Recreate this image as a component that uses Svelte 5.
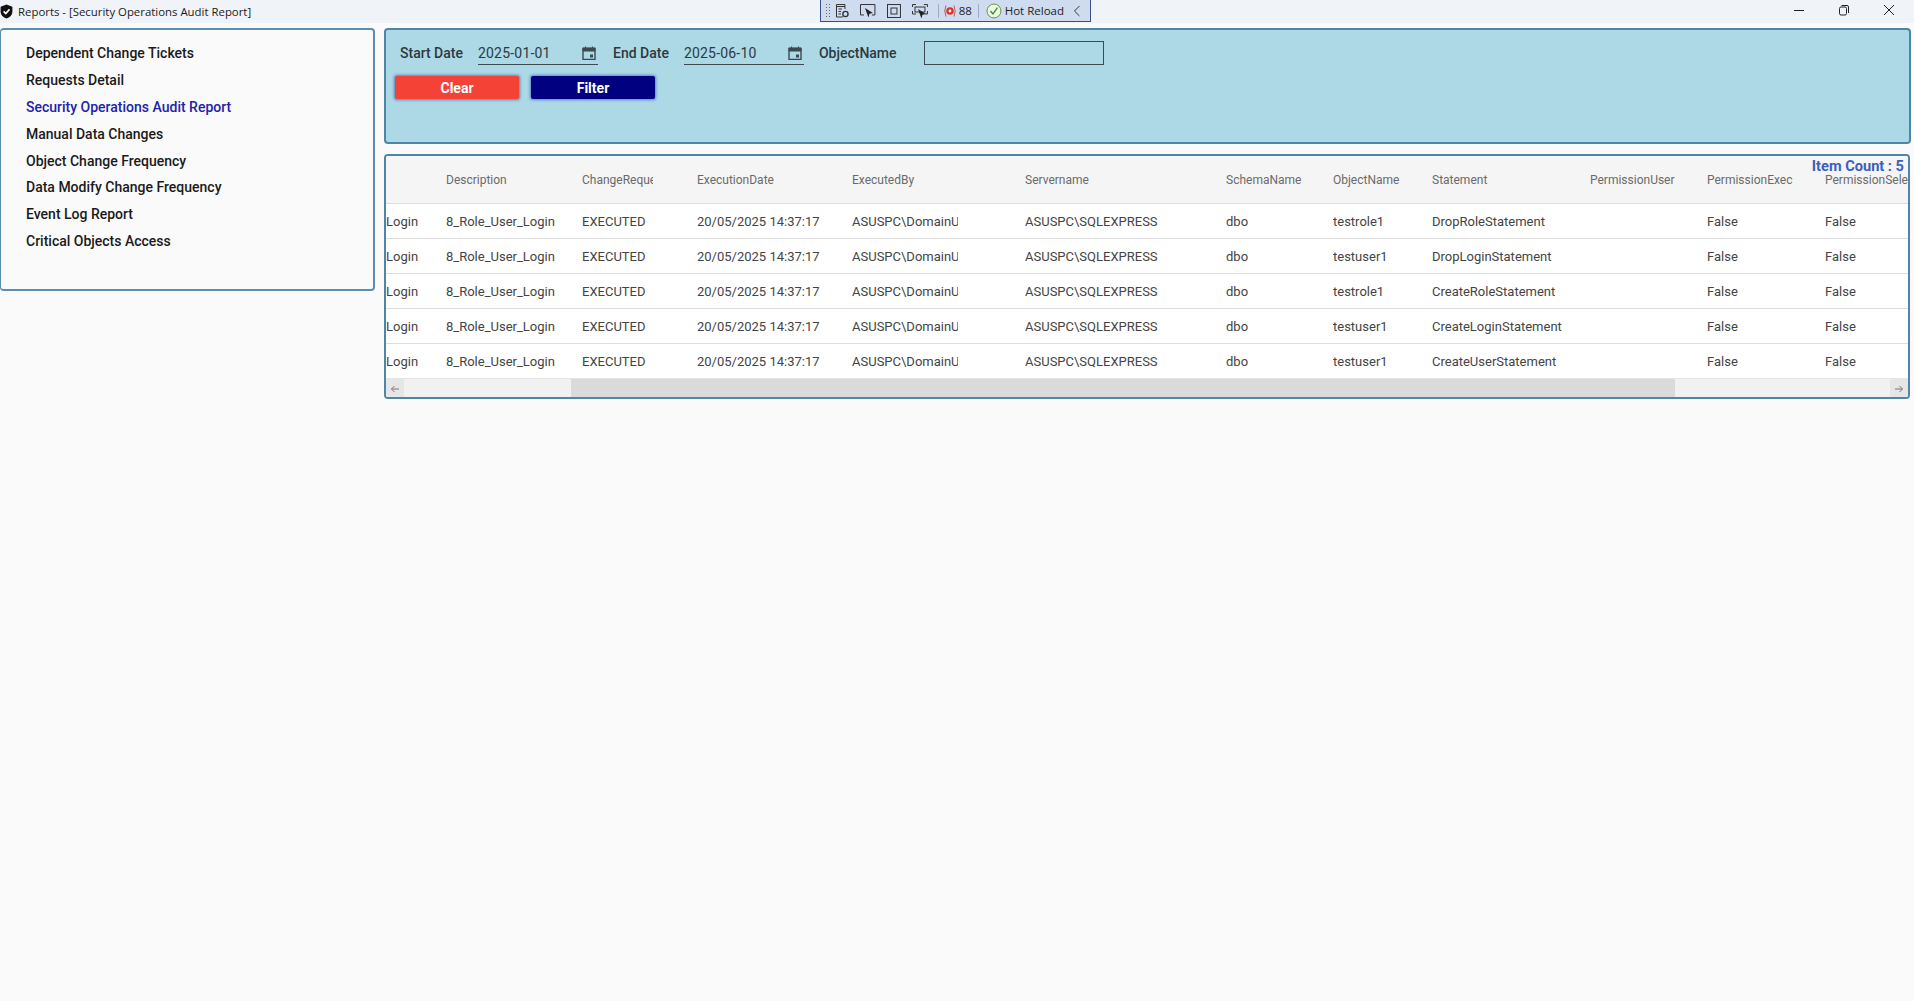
<script>
  const reports = [
    'Dependent Change Tickets',
    'Requests Detail',
    'Security Operations Audit Report',
    'Manual Data Changes',
    'Object Change Frequency',
    'Data Modify Change Frequency',
    'Event Log Report',
    'Critical Objects Access'
  ];
  const activeReport = 'Security Operations Audit Report';

  const columns = ['', 'Description', 'ChangeRequestStatus', 'ExecutionDate', 'ExecutedBy', 'Servername', 'SchemaName', 'ObjectName', 'Statement', 'PermissionUser', 'PermissionExec', 'PermissionSelect'];

  const rows = [
    ['testrole1', 'DropRoleStatement'],
    ['testuser1', 'DropLoginStatement'],
    ['testrole1', 'CreateRoleStatement'],
    ['testuser1', 'CreateLoginStatement'],
    ['testuser1', 'CreateUserStatement']
  ].map(([object, statement]) => [
    'Login', '8_Role_User_Login', 'EXECUTED', '20/05/2025 14:37:17', 'ASUSPC\\DomainUser',
    'ASUSPC\\SQLEXPRESS', 'dbo', object, statement, '', 'False', 'False'
  ]);
</script>

<div class="window">
  <header class="titlebar">
    <svg class="shield" viewBox="0 0 12 14" width="13" height="15">
      <path d="M6 0.5 L11.500 2.500 V7 C11.500 10.500 9 12.600 6 13.500 C3 12.600 0.500 10.500 0.500 7 V2.500 Z" fill="#111" />
      <path d="M3.300 6.900 L5.300 8.900 L8.800 5" fill="none" stroke="#fff" stroke-width="1.500" />
    </svg>
    <span class="title">Reports - [Security Operations Audit Report]</span>
    <div class="controls">
      <svg viewBox="0 0 12 12" width="12" height="12"><path d="M1 6.500 H11" stroke="#222" fill="none" /></svg>
      <svg viewBox="0 0 12 12" width="12" height="12">
        <rect x="1.500" y="3" width="7" height="8" rx="1.500" fill="none" stroke="#222" />
        <path d="M3.500 1.500 H9 Q10.500 1.500 10.500 3 V9" fill="none" stroke="#222" />
      </svg>
      <svg viewBox="0 0 12 12" width="12" height="12"><path d="M1 1 L11 11 M11 1 L1 11" stroke="#222" fill="none" /></svg>
    </div>
  </header>

  <div class="debugbar">
    <span class="grip"></span>
    <svg viewBox="0 0 16 16" width="16" height="16">
      <path d="M9 14 H2.500 V1.500 H11 V6" fill="none" stroke="#333" />
      <path d="M2.500 3.500 H11 M4.500 6 H8 M4.500 8.500 H7 M4.500 11 H7" stroke="#333" fill="none" />
      <circle cx="11.500" cy="11" r="2.600" fill="none" stroke="#333" stroke-width="1.400" />
    </svg>
    <svg viewBox="0 0 18 16" width="18" height="16">
      <path d="M5 12 H1.500 V1.500 H16 V12 H13" fill="none" stroke="#333" />
      <path d="M6 5 L14 10 L10.500 10.800 L9.500 14.500 Z" fill="#222" />
    </svg>
    <svg viewBox="0 0 16 16" width="16" height="16">
      <rect x="1.500" y="1.500" width="13" height="13" fill="none" stroke="#333" />
      <rect x="5" y="5" width="6" height="6" fill="none" stroke="#333" />
    </svg>
    <svg viewBox="0 0 18 16" width="18" height="16">
      <path d="M1.500 4 V1.500 H5 M13 1.500 H16.500 V4 M1.500 8 V11 H5 M16.500 8 V11 H14" fill="none" stroke="#333" />
      <rect x="4" y="4" width="10" height="5" fill="none" stroke="#333" />
      <path d="M7 6 L15 11 L11.500 11.800 L10.500 15.500 Z" fill="#222" />
    </svg>
    <span class="sep"></span>
    <svg class="rec" viewBox="0 0 14 14" width="14" height="14">
      <circle cx="7" cy="7" r="3.800" fill="#d8352c" />
      <circle cx="7" cy="7" r="1.400" fill="#fff" />
      <path d="M3 1.500 Q0.500 7 3 12.500 M11 1.500 Q13.500 7 11 12.500" fill="none" stroke="#c8554e" />
    </svg>
    <span class="count">88</span>
    <span class="sep"></span>
    <svg class="check" viewBox="0 0 16 16" width="16" height="16">
      <circle cx="8" cy="8" r="7" fill="#eef6e6" stroke="#5c9a3c" />
      <path d="M4.500 8 L7 11 L11.500 4.500" fill="none" stroke="#3f8a2c" stroke-width="1.300" />
    </svg>
    <span class="reload">Hot Reload</span>
    <svg class="chevron" viewBox="0 0 8 12" width="8" height="12"><path d="M6.500 1 L1.500 6 L6.500 11" fill="none" stroke="#333" /></svg>
  </div>

  <main class="content">
    <nav class="sidebar">
      {#each reports as report}
        <div class="report" class:active={report === activeReport}>{report}</div>
      {/each}
    </nav>

    <div class="main-column">
      <section class="filters">
        <div class="filter-row">
          <span class="filter-label start">Start Date</span>
          <div class="date-field">
            <span>2025-01-01</span>
            <svg viewBox="0 0 14 14" width="14" height="14">
              <path d="M1 2.500 H13 V13.500 H1 Z" fill="none" stroke="#3c4a50" stroke-width="1.400" />
              <path d="M1 2 H13 V5 H1 Z M3.500 0.500 V2.500 M10.500 0.500 V2.500" fill="#3c4a50" stroke="#3c4a50" />
              <rect x="8" y="8.500" width="3" height="3" fill="#3c4a50" />
            </svg>
          </div>
          <span class="filter-label">End Date</span>
          <div class="date-field">
            <span>2025-06-10</span>
            <svg viewBox="0 0 14 14" width="14" height="14">
              <path d="M1 2.500 H13 V13.500 H1 Z" fill="none" stroke="#3c4a50" stroke-width="1.400" />
              <path d="M1 2 H13 V5 H1 Z M3.500 0.500 V2.500 M10.500 0.500 V2.500" fill="#3c4a50" stroke="#3c4a50" />
              <rect x="8" y="8.500" width="3" height="3" fill="#3c4a50" />
            </svg>
          </div>
          <span class="filter-label object">ObjectName</span>
          <input class="object-input" type="text" />
        </div>
        <div class="buttons">
          <button class="btn clear">Clear</button>
          <button class="btn filter">Filter</button>
        </div>
      </section>

      <section class="grid-panel">
        <div class="item-count">Item Count : 5</div>
        <div class="grid-row head">
          {#each columns as col}
            <div class="cell">{col}</div>
          {/each}
        </div>
        {#each rows as row}
          <div class="grid-row">
            {#each row as value}
              <div class="cell">{value}</div>
            {/each}
          </div>
        {/each}
        <div class="hscroll">
          <span class="arrow">
            <svg viewBox="0 0 10 10" width="10" height="10"><path d="M9 5 H1.500 M4.500 2 L1.500 5 L4.500 8" fill="none" stroke="#777" /></svg>
          </span>
          <span class="track left"></span>
          <span class="thumb"></span>
          <span class="track right"></span>
          <span class="arrow">
            <svg viewBox="0 0 10 10" width="10" height="10"><path d="M1 5 H8.500 M5.500 2 L8.500 5 L5.500 8" fill="none" stroke="#777" /></svg>
          </span>
        </div>
      </section>
    </div>
  </main>
</div>

<style>
  :global(body) {
    margin: 0;
    background: #fafafa;
    font-family: Roboto, "Liberation Sans", sans-serif;
  }

  .window {
    position: relative;
    width: 1914px;
    height: 1001px;
    overflow: hidden;
    background: #fafafa;
  }

  /* Title bar */
  .titlebar {
    height: 23px;
    background: #f0f4f9;
    display: flex;
    align-items: center;
    color: #1a1a1a;
  }

  .shield {
    flex-shrink: 0;
  }

  .title {
    margin-left: 5px;
    font-family: "Open Sans", sans-serif;
    font-size: 11.4px;
  }

  .controls {
    margin-left: auto;
    display: flex;
    gap: 33px;
    padding-right: 19px;
    margin-top: -3px;
  }

  .debugbar {
    position: absolute;
    left: 820px;
    top: 0;
    width: 271px;
    height: 22px;
    box-sizing: border-box;
    background: #cfdcf0;
    border: 1px solid #3d4f86;
    border-top: none;
    display: flex;
    align-items: center;
    gap: 9px;
    padding: 0 4px;
    font-family: "Open Sans", sans-serif;
    font-size: 11.5px;
    color: #222;
    white-space: nowrap;
  }

  .grip {
    width: 6px;
    height: 16px;
    margin-right: -6px;
    background-image: radial-gradient(#667 0.6px, transparent 0.8px);
    background-size: 3px 3px;
  }

  .sep {
    width: 1px;
    height: 14px;
    background: #9fabc6;
  }

  .rec {
    margin-left: -5px;
  }

  .count {
    margin-left: -7px;
    margin-right: -3px;
  }

  .check {
    margin-left: -2px;
  }

  .reload {
    margin-left: -6px;
  }

  .chevron {
    margin-left: auto;
    margin-right: 5px;
  }

  /* Body */
  .content {
    display: flex;
    gap: 9px;
    padding-top: 5px;
    padding-right: 3px;
  }

  .sidebar {
    width: 375px;
    height: 263px;
    box-sizing: border-box;
    border: 2px solid #5b8db0;
    border-left-width: 1px;
    border-radius: 4px;
    padding: 10px 0 0 25px;
    background: #fafafa;
    flex-shrink: 0;
  }

  .report {
    height: 26.9px;
    line-height: 27px;
    font-size: 14px;
    font-weight: 500;
    color: #1a1a1a;
  }

  .report.active {
    color: #2222aa;
  }

  .main-column {
    flex: 1;
    min-width: 0;
    display: flex;
    flex-direction: column;
    gap: 10px;
  }

  /* Filter panel */
  .filters {
    height: 116px;
    box-sizing: border-box;
    background: #add8e6;
    border: 2px solid #4f86a8;
    border-radius: 4px;
    padding: 10px 0 0 9px;
  }

  .filter-row {
    display: flex;
    align-items: center;
    height: 26px;
    font-size: 14px;
    color: #2b3a40;
  }

  .filter-label {
    font-weight: 500;
    white-space: nowrap;
  }

  .filter-label.start {
    margin-left: 5px;
  }

  .date-field {
    width: 120px;
    height: 24px;
    margin: 0 15px;
    box-sizing: border-box;
    border-bottom: 1px solid #3c4a50;
    display: flex;
    align-items: center;
    justify-content: space-between;
    padding-right: 2px;
    letter-spacing: 0.2px;
  }

  .filter-label.object {
    width: 105px;
  }

  .object-input {
    width: 180px;
    height: 24px;
    box-sizing: border-box;
    background: #add8e6;
    border: 1px solid #3c4a50;
    padding: 0;
  }

  .buttons {
    display: flex;
    gap: 12px;
    margin-top: 10px;
  }

  .btn {
    width: 124px;
    height: 23px;
    border: none;
    border-radius: 2px;
    color: #fff;
    font-family: inherit;
    font-size: 14px;
    font-weight: 700;
    padding: 0;
  }

  .btn.clear {
    background: #f44336;
    box-shadow: 0 0 3px 1px #5a7fb0;
  }

  .btn.filter {
    background: #000080;
    box-shadow: 0 0 3px 1px #4f86d8;
  }

  /* Grid */
  .grid-panel {
    position: relative;
    height: 245px;
    margin-right: 1px;
    box-sizing: border-box;
    border: 2px solid #4f86a8;
    border-radius: 4px;
    background: #fff;
    overflow: hidden;
  }

  .item-count {
    position: absolute;
    top: 1px;
    right: 4px;
    font-size: 14.6px;
    font-weight: 700;
    color: #3a5fbf;
    z-index: 1;
  }

  .grid-row {
    display: grid;
    grid-template-columns: 60px 136px 115px 155px 173px 201px 107px 99px 158px 117px 118px 90px;
    height: 35px;
    align-items: center;
    border-bottom: 1px solid #ddd;
    box-sizing: border-box;
    font-size: 13px;
    color: #444;
    white-space: nowrap;
  }

  .grid-row:nth-last-child(2) {
    height: 34px;
    border-bottom: none;
  }

  .grid-row.head {
    height: 48px;
    background: #f5f5f5;
    font-size: 12px;
    color: #6a6a6a;
  }

  .cell {
    overflow: hidden;
  }

  .cell:nth-child(3) {
    max-width: 71px;
  }

  .cell:nth-child(5) {
    max-width: 106px;
  }

  .hscroll {
    display: flex;
    height: 20px;
    border-top: 1px solid #e4e4e4;
    box-sizing: border-box;
    background: #f1f1f1;
  }

  .arrow {
    width: 18px;
    flex-shrink: 0;
    display: flex;
    align-items: center;
    justify-content: center;
    background: #e6e6e6;
  }

  .track.left {
    width: 167px;
  }

  .thumb {
    width: 1104px;
    background: #dadada;
  }

  .track.right {
    flex: 1;
  }
</style>
